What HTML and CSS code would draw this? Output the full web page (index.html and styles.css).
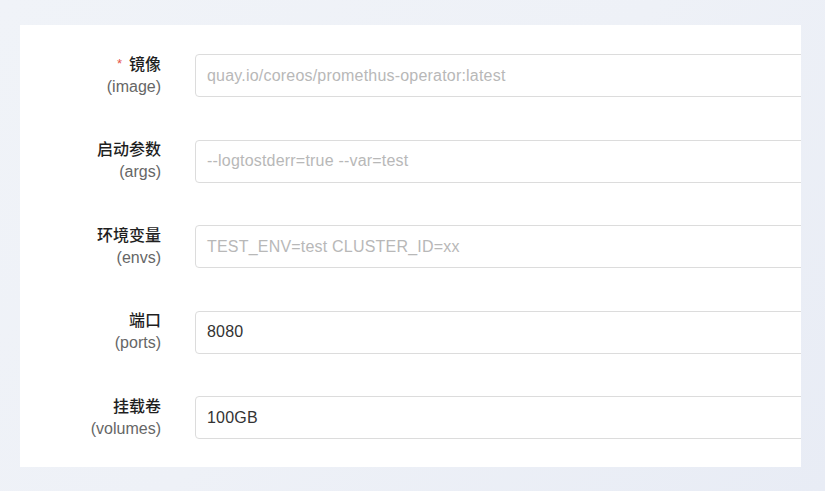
FILE: index.html
```html
<!DOCTYPE html>
<html lang="zh">
<head>
<meta charset="utf-8">
<link rel="stylesheet" href="styles.css">
</head>
<body>
<div class="card">
  <form class="form">
    <div class="row">
      <div class="label"><div class="zh"><span class="req">*</span>镜像</div><div class="en">(image)</div></div>
      <div class="input placeholder">quay.io/coreos/promethus-operator:latest</div>
    </div>
    <div class="row">
      <div class="label"><div class="zh">启动参数</div><div class="en">(args)</div></div>
      <div class="input placeholder">--logtostderr=true --var=test</div>
    </div>
    <div class="row">
      <div class="label"><div class="zh">环境变量</div><div class="en">(envs)</div></div>
      <div class="input placeholder">TEST_ENV=test CLUSTER_ID=xx</div>
    </div>
    <div class="row">
      <div class="label"><div class="zh">端口</div><div class="en">(ports)</div></div>
      <div class="input">8080</div>
    </div>
    <div class="row">
      <div class="label"><div class="zh">挂载卷</div><div class="en">(volumes)</div></div>
      <div class="input">100GB</div>
    </div>
  </form>
</div>
</body>
</html>
```
FILE: styles.css
```css
* { box-sizing: border-box; }
html, body { margin: 0; height: 100%; }
body {
  background: linear-gradient(135deg, #f0f3f8 0%, #eef1f7 50%, #e8ecf5 100%);
  font-family: "Liberation Sans", "Noto Sans CJK SC", sans-serif;
  padding: 25px 0 0 20px;
  overflow: hidden;
}
.card {
  width: 781px;
  height: 442px;
  background: #fff;
  overflow: hidden;
}
.form {
  display: flex;
  flex-direction: column;
  gap: 42.5px;
  padding-top: 29px;
}
.row {
  display: flex;
  align-items: center;
  gap: 34px;
  height: 43px;
}
.label {
  width: 141px;
  text-align: right;
  flex-shrink: 0;
}
.zh {
  font-size: 16px;
  line-height: 22px;
  color: #1f1f1f;
  font-weight: 500;
}
.req {
  color: #e5534b;
  font-size: 13px;
  margin-right: 7px;
  vertical-align: 2px;
}
.en {
  font-size: 16px;
  line-height: 22px;
  color: #666;
}
.input {
  width: 640px;
  flex-shrink: 0;
  height: 43px;
  border: 1px solid #dcdcdc;
  border-radius: 4px;
  padding: 0 11px;
  display: flex;
  align-items: center;
  font-size: 16px;
  letter-spacing: 0.2px;
  color: #333;
}
.placeholder { color: #b8b8b8; }
```
